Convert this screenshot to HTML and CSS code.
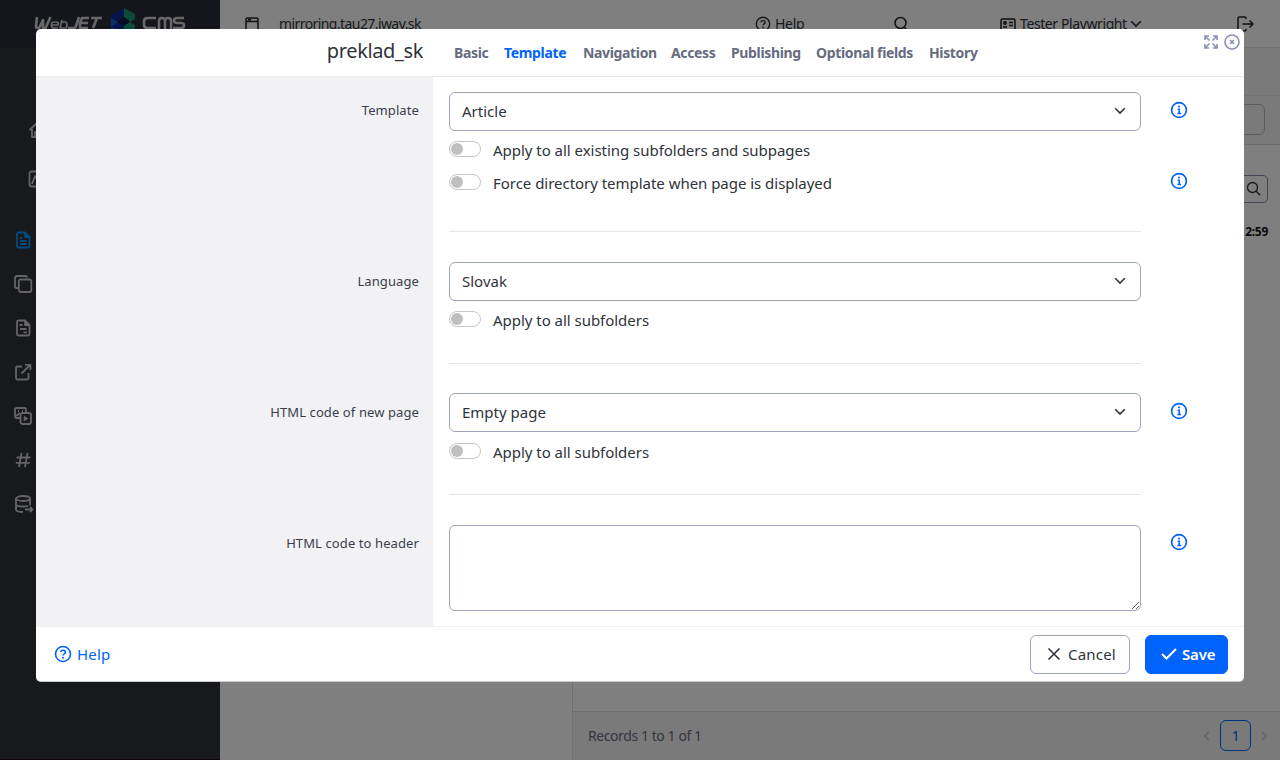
FILE: index.html
```html
<!DOCTYPE html>
<html lang="en">
<head>
<meta charset="utf-8">
<title>WebJET CMS</title>
<link rel="stylesheet" href="styles.css">
</head>
<body>
<svg class="defs" width="0" height="0">
  <symbol id="info" viewBox="0 0 18 18"><circle cx="9" cy="9" r="7.4" fill="none" stroke="currentColor" stroke-width="1.7"/><path d="M7.6 8.200h1.600v4M7.400 12.400h3.600" fill="none" stroke="currentColor" stroke-width="1.500"/><circle cx="9" cy="5.600" r="1" fill="currentColor"/></symbol>
  <symbol id="help" viewBox="0 0 18 18"><circle cx="9" cy="9" r="7.500" stroke-width="1.600" fill="none" stroke="currentColor"/><path d="M6.700 7C6.900 4.600 11.400 4.600 11.400 7.200C11.400 8.800 9 8.800 9 10.500" stroke-width="1.600" fill="none" stroke="currentColor"/><circle cx="9" cy="12.800" r="1" fill="currentColor" stroke="none"/></symbol>
  <symbol id="down" viewBox="0 0 12 8"><path d="M1.200 1.200L6 6l4.800-4.800" fill="none" stroke="currentColor" stroke-width="1.600"/></symbol>
  <symbol id="search" viewBox="0 0 16 16"><path d="M10.200 10.200l4 4M11.500 6.500a5 5 0 1 1-10 0a5 5 0 1 1 10 0z" fill="none" stroke="currentColor" stroke-width="1.300"/></symbol>
</svg>
<div class="app">
  <aside class="sidebar">
    <div class="brand">
      <svg width="152" height="36" viewBox="0 0 152 36">
        <g fill="none" stroke="#d0d0d0" stroke-width="2.600" stroke-linejoin="round">
          <path d="M3 17l-1 9q0 2 1 2h2l4-8v8h2.500l5-11"/>
          <path d="M18 25h6q1-3-1.500-3h-3q-2 0-2 3t2 3H24M28 20l-2 8h5q2 0 2-3t-2-3h-3" stroke-width="1.700"/>
          <path d="M45 17l-3 9q-.5 2-2 2h-6M55 18h-7l-2 5v5h8M47 23h7M57 18h11M63 18l-4 10"/>
          <path d="M122 18h-8q-4 0-4 3v4q0 3 4 3h8M125 29v-8q0-3 3-3t3 3v8M131 21q0-3 3-3t3 3v8M150 18h-7q-3 0-3 2.500t3 2.500h4q3 0 3 2.500t-3 2.500h-8"/>
        </g>
        <path d="M77 15L90 8v8l-6 4 6 4v12H77z" fill="#0a2ba0"/>
        <path d="M77 18l7 4-7 5zM77 27l6 3-6 4z" fill="#1c5fc8"/>
        <path d="M90 8l11 6v5l-5 3 5 3v7l-11 4V24l6-3-6-4z" fill="#1b9b70"/>
        <path d="M83 22l7-5 6 5-6 4z" fill="#041b48"/>
      </svg>
    </div>
    <nav class="menu">
      <svg class="indent" viewBox="0 0 18 18"><path d="M1.500 9L9 2l7.500 7M4 8v8h10V8M7 16v-5h4v5"/></svg>
      <svg class="indent" viewBox="0 0 18 18"><rect x="1.500" y="1.500" width="15" height="15" rx="2"/><path d="M4 14l3-8 5 8"/></svg>
      <svg class="on" viewBox="0 0 18 18"><path d="M4.500 1.500H11l4.500 4.500v9q0 1.500-1.500 1.500H4.500Q3 16.500 3 15V3q0-1.500 1.500-1.500zM6 7h2M6 10h6.500M6 13h6.500"/><path d="M11 2v4h4z" fill="currentColor"/></svg>
      <svg viewBox="0 0 18 18"><rect x="4.800" y="4.500" width="12.500" height="12.500" rx="2"/><path d="M4 13H2.500Q1 13 1 11.500v-8Q1 1 3 1h8q2 0 2 1.500"/></svg>
      <svg viewBox="0 0 18 18"><path d="M4.500 1.500H11l4.500 4.500v9q0 1.500-1.500 1.500H4.500Q3 16.500 3 15V3q0-1.500 1.500-1.500zM5.500 6h3M6 10h6.500M9.500 13.300H13"/><path d="M11 2v4h4z" fill="currentColor"/></svg>
      <svg viewBox="0 0 18 18"><path d="M8 3.500H3.500Q2 3.500 2 5v10q0 1.500 1.500 1.500h9.500q1.500 0 1.500-1.500v-5M11 1.800h5.500V7M16.200 2L7.500 10.500"/></svg>
      <svg viewBox="0 0 18 18"><path d="M6 11H2.500Q1 11 1 9.500v-7Q1 1 2.500 1h8Q12 1 12 2.500V5M2 9l4-3M4 4h1M8 4h1"/><rect x="6.500" y="6" width="10.500" height="11" rx="2"/><path d="M10 9l4 2.500-4 2.500z" fill="currentColor" stroke-width=".5"/></svg>
      <svg viewBox="0 0 18 18"><path d="M7.500 2L5 16M13.500 2L11 16M2.500 6.500h14M1.800 11.800h14"/></svg>
      <svg viewBox="0 0 18 18"><ellipse cx="9" cy="3.500" rx="7" ry="2.500"/><path d="M2 3.500v11q0 2.500 7 2.500M16 3.500v7M2 9q0 2.500 7 2.500 3 0 5-.5M11 14.500h7.500M16 11.800l2.500 2.700-2.500 2.700"/></svg>
    </nav>
  </aside>
  <main class="main">
    <header class="topbar">
      <svg class="t-window" viewBox="0 0 14 14"><path d="M1 2.500Q1 1 2.500 1h9Q13 1 13 2.500V13H1zM1 4.500h12M3 2.700h3" /></svg>
      <span class="t-domain">mirroring.tau27.iway.sk</span>
      <span class="t-help"><svg width="16" height="16"><use href="#help"/></svg>Help</span>
      <svg class="t-search" viewBox="0 0 16 16"><path d="M10.500 10.500L14 14M13 7A5.500 5.500 0 1 1 2 7a5.500 5.500 0 0 1 11 0z"/></svg>
      <span class="t-user"><svg width="16" height="14" viewBox="0 0 16 14"><rect x="1" y="2" width="14" height="11" rx="1.500"/><circle cx="5" cy="6" r="1.200"/><path d="M9 5.500h4M9 8.500h4M3 10h4"/></svg><b>Tester Playwright</b><svg width="12" height="8"><use href="#down"/></svg></span>
      <svg class="t-exit" viewBox="0 0 18 16"><path d="M10 3V2.500Q10 1 8.500 1h-5Q2 1 2 2.500v11Q2 15 3.500 15h5q1.500 0 1.500-1.500V13M6.500 8H17M13.500 4.500L17 8l-3.500 3.500"/></svg>
    </header>
    <div class="band"></div>
    <div class="band tools"><div class="toolbox"></div></div>
    <div class="work">
      <section class="tree"></section>
      <section class="grid">
        <div class="filter"><svg width="16" height="16"><use href="#search"/></svg></div>
        <div class="time">12:59</div>
        <footer class="records"><span>Records 1 to 1 of 1</span>
          <div class="pager"><svg width="7" height="10" viewBox="0 0 7 10"><path d="M6 1L2 5l4 4"/></svg><span class="page">1</span><svg width="7" height="10" viewBox="0 0 7 10"><path d="M1 1l4 4-4 4"/></svg></div>
        </footer>
      </section>
    </div>
  </main>
</div>
<div class="overlay"></div>
<div class="modal">
  <header class="m-head">
    <h1>preklad_sk</h1>
    <nav class="tabs"><span class="w1">Basic</span><span class="w2 active">Template</span><span class="w3">Navigation</span><span class="w4">Access</span><span class="w5">Publishing</span><span class="w6">Optional fields</span><span class="w7">History</span></nav>
    <div class="win">
      <svg width="16" height="16" viewBox="0 0 16 16"><path d="M2 6V2h4M10 2h4v4M14 10v4h-4M6 14H2v-4M2.500 2.500l4 4M13.500 2.500l-4 4M13.500 13.500l-4-4M2.500 13.500l4-4"/></svg>
      <svg width="16" height="16" viewBox="0 0 16 16"><circle cx="8" cy="8" r="7"/><path d="M6 6l4 4M10 6l-4 4"/></svg>
    </div>
  </header>
  <div class="m-body">
    <div class="row r1">
      <label>Template</label>
      <div class="field">
        <div class="select"><span>Article</span><svg width="12" height="8"><use href="#down"/></svg></div>
        <div class="check"><i></i><span>Apply to all existing subfolders and subpages</span></div>
        <div class="check"><i></i><span>Force directory template when page is displayed</span></div>
      </div>
      <div class="tips"><svg width="18" height="18"><use href="#info"/></svg><svg width="18" height="18"><use href="#info"/></svg></div>
    </div>
    <div class="row r2">
      <label>Language</label>
      <div class="field">
        <div class="select"><span>Slovak</span><svg width="12" height="8"><use href="#down"/></svg></div>
        <div class="check"><i></i><span>Apply to all subfolders</span></div>
      </div>
    </div>
    <div class="row r3">
      <label>HTML code of new page</label>
      <div class="field">
        <div class="select"><span>Empty page</span><svg width="12" height="8"><use href="#down"/></svg></div>
        <div class="check"><i></i><span>Apply to all subfolders</span></div>
      </div>
      <div class="tips"><svg width="18" height="18"><use href="#info"/></svg></div>
    </div>
    <div class="row r4">
      <label>HTML code to header</label>
      <div class="field"><textarea></textarea></div>
      <div class="tips"><svg width="18" height="18"><use href="#info"/></svg></div>
    </div>
  </div>
  <footer class="m-foot">
    <span class="helplink"><svg width="18" height="18"><use href="#help"/></svg><span>Help</span></span>
    <button class="btn cancel"><svg width="14" height="14" viewBox="0 0 14 14"><path d="M1.500 1.500l11 11M12.500 1.500l-11 11"/></svg><span>Cancel</span></button>
    <button class="btn save"><svg width="16" height="12" viewBox="0 0 16 12"><path d="M1 6l4.500 4.500L15 1"/></svg><span>Save</span></button>
  </footer>
</div>
</body>
</html>
```
FILE: styles.css
```css
* { box-sizing: border-box; }
body { margin: 0; width: 1280px; height: 760px; overflow: hidden; position: relative; font: 15px/20px "Noto Sans", sans-serif; color: #30333a; }
svg { display: block; flex: none; }
.defs { position: absolute; }
.app { display: flex; height: 760px; }
.sidebar { width: 220px; background: #2f323b; border-bottom: 1px solid #200818; }
.brand { height: 48px; padding-left: 34px; border-bottom: 1px solid #282a32; background: #2b2d36; }
.menu { padding: 73px 0 0 14px; color: #c8c8c8; display: flex; flex-direction: column; gap: 26px; }
.menu svg { width: 18px; height: 18px; fill: none; stroke: currentColor; stroke-width: 1.8; stroke-linejoin: round; overflow: visible; }
.menu .indent { margin-left: 14px; margin-bottom: 5px; }
.menu .indent + .indent { margin-bottom: 17px; }
.menu .on { color: #0094ff; }
.main { width: 1060px; display: flex; flex-direction: column; background: #fff; }
.topbar { height: 48px; display: flex; align-items: center; padding-left: 25px; border-bottom: 1px solid #e4e4e4; font-size: 14px; letter-spacing: -.3px; }
.topbar svg { fill: none; stroke: #222; stroke-width: 1.5; }
.t-window { width: 14px; height: 14px; }
.t-domain { width: 142px; margin-left: 20px; white-space: nowrap; letter-spacing: -.58px; }
.t-help { margin-left: 334px; display: flex; align-items: center; gap: 4px; width: 50px; }
.t-search { width: 16px; height: 16px; margin-left: 88px; }
.t-user { margin-left: 91px; display: flex; align-items: center; gap: 4px; width: 142px; white-space: nowrap; letter-spacing: -.4px; }
.t-user b { font-weight: 400; width: 106px; }
.t-exit { width: 18px; height: 16px; margin-left: 94px; }
.band { height: 48px; background: #f5f5f5; border-bottom: 1px solid #e4e4e4; }
.band.tools { height: 49px; padding: 8px 15px; border-color: #d8dae2; }
.toolbox { margin-left: auto; width: 130px; height: 31px; border: 1px solid #b4b8c8; border-radius: 6px; }
.work { flex: 1; display: flex; }
.tree { width: 353px; border-right: 1px solid #e0e0e0; }
.grid { flex: 1; display: flex; flex-direction: column; }
.filter { width: 60px; height: 28px; margin: 30px 12px 0 auto; border: 1px solid #858ca5; border-radius: 5px; display: flex; align-items: center; justify-content: flex-end; padding-right: 5px; }
.time { font-size: 12px; font-weight: 700; text-align: right; padding-right: 12px; margin-top: 19px; letter-spacing: -.3px; color: #111; }
.records { height: 49px; margin-top: auto; border-top: 1px solid #dcdcdc; background: #f4f4f4; display: flex; align-items: center; justify-content: space-between; padding: 0 12px 1px 15px; color: #686c80; font-size: 14px; letter-spacing: -.42px; }
.pager { display: flex; align-items: center; gap: 10px; }
.pager svg { fill: none; stroke: #c8c8d0; stroke-width: 1.5; }
.page { width: 31px; height: 31px; border: 1px solid #0063fb; border-radius: 6px; color: #0063fb; text-align: center; line-height: 30px; }
.overlay { position: absolute; inset: 0; background: rgba(0,0,0,.5); }
.modal { position: absolute; left: 36px; top: 29px; width: 1208px; height: 653px; border-radius: 5px; overflow: hidden; background: #fff; display: flex; flex-direction: column; border-bottom: 1px solid #ccc; }
.m-head { height: 48px; border-bottom: 1px solid #e9e9ec; display: flex; }
h1 { width: 387px; margin: 0; font: 400 20px/44px "Noto Sans", sans-serif; letter-spacing: -.38px; text-align: right; }
.tabs { display: flex; gap: 16px; margin-left: 31px; font-size: 14px; line-height: 48px; font-weight: 700; color: #666b80; letter-spacing: -.35px; white-space: nowrap; }
.active { color: #0063fb; }
.w1 { width: 34px; } .w2 { width: 63px; } .w3 { width: 72px; } .w4 { width: 44px; } .w5 { width: 69px; } .w6 { width: 97px; }
.win { display: flex; gap: 5px; margin: 5px 4px 0 auto; }
.win svg { fill: none; stroke: #8a91ae; stroke-width: 1.6; }
.m-body { height: 549px; padding-top: 15px; background: linear-gradient(90deg, #f2f2f5 397px, #fff 397px); }
.row { display: flex; }
.row label { width: 383px; padding-top: 8px; text-align: right; font-size: 13px; color: #3a3e4a; letter-spacing: .1px; }
.r2 label, .r3 label { padding-top: 9px; }
.field { width: 692px; margin-left: 30px; }
.r1 .field { height: 140px; border-bottom: 1px solid #e4e5e8; }
.r2 .field { height: 102px; border-bottom: 1px solid #e4e5e8; }
.r3 .field { height: 102px; border-bottom: 1px solid #e4e5e8; }
.r2, .r4 { margin-top: 30px; }
.r3 { margin-top: 29px; }
.select { height: 39px; border: 1px solid #9da4bb; border-radius: 6px; display: flex; align-items: center; justify-content: space-between; padding: 0 14px 1px 12px; }
.check { height: 33px; display: flex; align-items: center; gap: 12px; }
.select + .check { margin-top: 3px; }
.r3 .check { margin-top: 4px; }
.check i { width: 32px; height: 16px; border: 1px solid #c6c6c6; border-radius: 8px; padding: 1px; margin-top: -3px; }
.check i::before { content: ""; display: block; width: 12px; height: 12px; border-radius: 50%; background: #bfbfbf; }
.check span { white-space: nowrap; letter-spacing: -.03px; margin-top: -2px; }
.tips { color: #0063fb; margin: 9px 0 0 29px; display: flex; flex-direction: column; gap: 53px; }
.r4 .tips { margin-top: 8px; }
textarea { display: block; width: 692px; height: 86px; border: 1px solid #9da4bb; border-radius: 6px; background: #fff; }
.m-foot { height: 55px; border-top: 1px solid #f1f1f3; display: flex; align-items: center; padding: 0 16px 0 18px; }
.helplink { color: #0063fb; display: flex; gap: 5px; align-items: center; margin-right: auto; letter-spacing: .2px; }
.btn { height: 39px; border: 1px solid #9da4bb; border-radius: 6px; background: #fff; font: 15px/20px "Noto Sans", sans-serif; color: #30333a; display: flex; align-items: center; padding: 0; }
.btn svg { fill: none; stroke: currentColor; stroke-width: 1.600; }
.cancel { width: 100px; padding-left: 16px; gap: 7px; letter-spacing: .2px; }
.save { width: 83px; margin-left: 15px; padding-left: 15px; gap: 5px; background: #0063fb; border-color: #0063fb; color: #fff; font-weight: 600; letter-spacing: -.2px; }
.save svg { stroke-width: 2; }
```
